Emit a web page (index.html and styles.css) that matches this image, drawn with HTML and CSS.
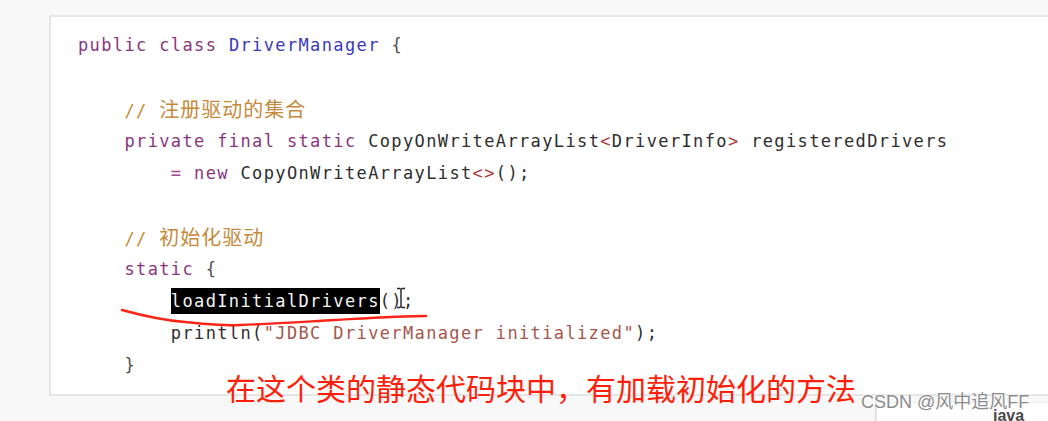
FILE: index.html
```html
<!DOCTYPE html>
<html lang="zh">
<head>
<meta charset="utf-8">
<title>DriverManager</title>
<link rel="stylesheet" href="styles.css">
</head>
<body>
<div class="stage">
  <div class="code-box">
    <div class="ln"><span class="kw">public</span> <span class="kw">class</span> <span class="cls">DriverManager</span> <span class="br">{</span></div>
    <div class="ln"> </div>
    <div class="ln">    <span class="cm">// <span class="cjk">注册驱动的集合</span></span></div>
    <div class="ln">    <span class="kw">private</span> <span class="kw">final</span> <span class="kw">static</span> CopyOnWriteArrayList<span class="ang">&lt;</span>DriverInfo<span class="ang">&gt;</span> registeredDrivers</div>
    <div class="ln">        <span class="op">=</span> <span class="kw">new</span> CopyOnWriteArrayList<span class="ang">&lt;&gt;</span>();</div>
    <div class="ln"> </div>
    <div class="ln">    <span class="cm">// <span class="cjk">初始化驱动</span></span></div>
    <div class="ln">    <span class="kw">static</span> <span class="br">{</span></div>
    <div class="ln">        <span class="sel">loadInitialDrivers</span><span class="caret-wrap">()<svg class="ibeam" width="10" height="22" viewBox="0 0 10 22"><path d="M1 1.5h3.2M5.8 1.5h3.2M5 2v18M1 20.5h3.2M5.8 20.5h3.2" stroke="#222" stroke-width="1.4" fill="none"/><path d="M4.2 1.5q0.8 0 0.8 1M5.8 1.5q-0.8 0-0.8 1M4.2 20.5q0.8 0 0.8-1M5.8 20.5q-0.8 0-0.8-1" stroke="#222" stroke-width="1" fill="none"/></svg></span>;</div>
    <div class="ln">        println(<span class="str">"JDBC DriverManager initialized"</span>);</div>
    <div class="ln">    <span class="br">}</span></div>
  </div>
  <div class="java-box"><span class="java-label">java</span></div>

  <svg class="scribble" width="1048" height="421" viewBox="0 0 1048 421">
    <path d="M122 310 C 140 315, 160 320, 185 322 C 205 324, 222 326, 240 325 C 270 324, 300 322, 335 320 C 370 318, 400 316, 426 316" stroke="#ff2418" stroke-width="2.4" fill="none" stroke-linecap="round"/>
  </svg>
  <div class="note">在这个类的静态代码块中，有加载初始化的方法</div>
  <div class="watermark">CSDN @风中追风FF</div>
</div>
</body>
</html>
```
FILE: styles.css
```css
html, body {
  margin: 0;
  padding: 0;
}
body {
  background: #f8f8f8;
  width: 1048px;
  height: 421px;
  overflow: hidden;
}
.stage {
  position: relative;
  width: 1048px;
  height: 421px;
  padding-top: 15px;
  box-sizing: border-box;
}
.code-box {
  margin-left: 49px;
  width: 1020px;
  height: 381px;
  box-sizing: border-box;
  background: #ffffff;
  border: 2px solid #e6e6e6;
  border-right: none;
  padding: 12px 0 0 27px;
  font-family: "DejaVu Sans Mono", "Liberation Mono", "Noto Sans CJK SC", monospace;
  font-size: 17px;
  letter-spacing: 1.37px;
  color: #2e2e2e;
}
.ln {
  white-space: pre;
  height: 32px;
  line-height: 32px;
}
.kw { color: #8a3580; }
.cls { color: #3a3ab8; }
.br { color: #505050; }
.cm { color: #c68a3c; }
.cjk {
  font-family: "Noto Sans CJK SC", sans-serif;
  font-size: 20px;
  letter-spacing: 1px;
}
.ang { color: #b23a3a; }
.op { color: #a2448a; }
.str { color: #a4574c; }
.sel {
  display: inline-block;
  background: #000;
  color: #f4f4f4;
  line-height: 26px;
}
.caret-wrap {
  position: relative;
}
.ibeam {
  position: absolute;
  left: 16px;
  top: -4px;
}
.java-box {
  margin: 6px 0 0 875px;
  height: 30px;
  background: #ffffff;
  border-left: 2px solid #e3e3e3;
  border-top: 1px solid #ececec;
  padding-left: 116px;
}
.java-label {
  font-family: "Liberation Sans", Arial, sans-serif;
  font-size: 16px;
  font-weight: bold;
  color: #4a4a4a;
  line-height: 20px;
  position: relative;
  top: 3px;
}
.scribble {
  position: absolute;
  left: 0;
  top: 0;
  pointer-events: none;
}
.note {
  position: absolute;
  left: 226px;
  top: 369px;
  font-family: "Noto Sans CJK SC", sans-serif;
  font-size: 30px;
  line-height: 36px;
  color: #ff1e0a;
  white-space: nowrap;
}
.watermark {
  position: absolute;
  left: 861px;
  top: 391px;
  font-family: "Liberation Sans", "Noto Sans CJK SC", sans-serif;
  font-size: 18px;
  line-height: 22px;
  color: #8c8c8c;
  text-shadow: 0 0 2px #ffffff, 0 0 2px #ffffff;
  white-space: nowrap;
}
```
